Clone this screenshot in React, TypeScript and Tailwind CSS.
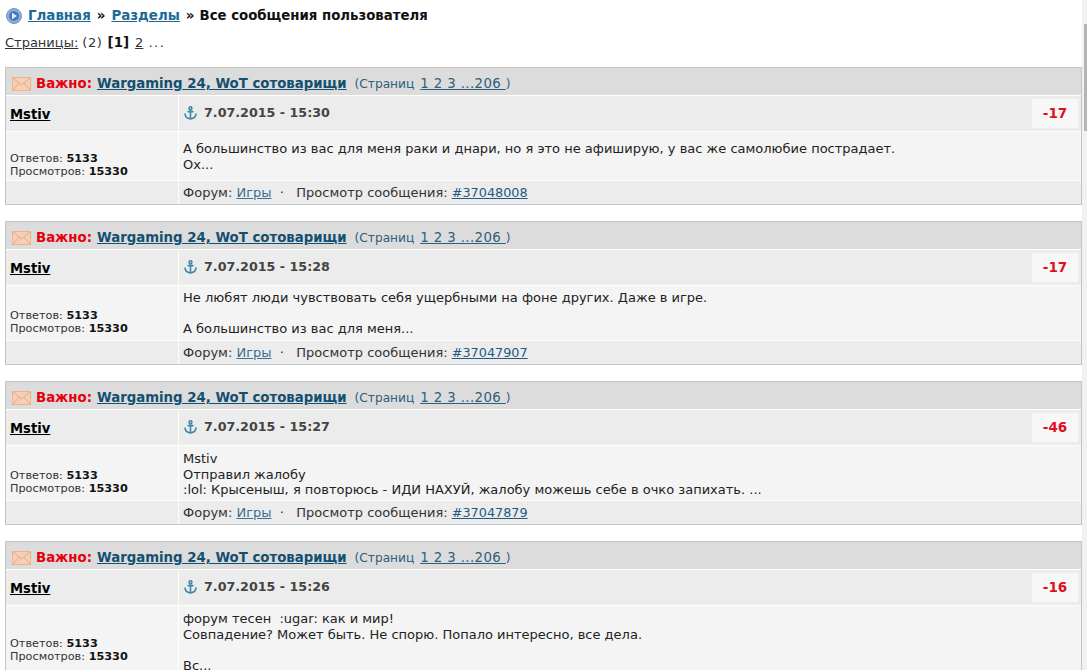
const posts = [
  { time: "7.07.2015 - 15:30", rating: "-17", id: "#37048008", bodyH: "h-[48px]", statPb: "pb-[2px]", bodyPt: "pt-[9px]", lines: ["А большинство из вас для меня раки и днари, но я это не афиширую, у вас же самолюбие пострадает.", "Ох..."] },
  { time: "7.07.2015 - 15:28", rating: "-17", id: "#37047907", bodyH: "h-[54px]", statPb: "pb-[5px]", bodyPt: "pt-[4px]", lines: ["Не любят люди чувствовать себя ущербными на фоне других. Даже в игре.", "\u00a0", "А большинство из вас для меня..."] },
  { time: "7.07.2015 - 15:27", rating: "-46", id: "#37047879", bodyH: "h-[54px]", statPb: "pb-[5px]", bodyPt: "pt-[5px]", lines: ["Mstiv", "Отправил жалобу", ":lol: Крысеныш, я повторюсь - ИДИ НАХУЙ, жалобу можешь себе в очко запихать. ..."] },
  { time: "7.07.2015 - 15:26", rating: "-16", id: "#37047800", bodyH: "h-[72px]", statPb: "pb-[15px]", bodyPt: "pt-[5px]", lines: ["форум тесен  :ugar: как и мир!", "Совпадение? Может быть. Не спорю. Попало интересно, все дела.", "\u00a0", "Вс..."] },
];

function Envelope() {
  return (
    <svg width="19" height="14" viewBox="0 0 19 14" className="shrink-0">
      <rect x="0.5" y="0.5" width="18" height="13" fill="#f6cfb4" stroke="#eeb48f" />
      <path d="M1 1l8.5 7L18 1M1 13l6-6.5M18 13l-6-6.5" fill="none" stroke="#e9a67c" />
    </svg>
  );
}

function Anchor() {
  return (
    <svg width="13" height="14" viewBox="0 0 13 14" className="shrink-0" fill="none" stroke="#3f86a8" strokeWidth="1.6">
      <circle cx="6.5" cy="2.2" r="1.4" />
      <path d="M6.5 3.6V13M3.5 5.6h6M1 7.5c0 3 2.5 5 5.5 5.5 3-.5 5.5-2.5 5.5-5.5" />
    </svg>
  );
}

function PlayBullet() {
  return (
    <svg width="16" height="16" viewBox="0 0 16 16" className="shrink-0">
      <circle cx="8" cy="8" r="7.5" fill="#8fb1dc" stroke="#6f93c4" />
      <circle cx="8" cy="8" r="5" fill="#4a76c4" />
      <path d="M6 4.8v6.4L11 8z" fill="#e6eefa" />
    </svg>
  );
}

function Post({ post }: { post: (typeof posts)[number] }) {
  return (
    <div className="border border-[#c4c4c4] bg-white">
      <div className="flex h-[27px] items-center gap-[5px] bg-[#dcdcdc] pl-[6px] pt-[5px] text-[13.3px]">
        <Envelope />
        <span className="font-bold text-[#e8000f]">Важно:</span>
        <a className="font-bold text-[#134f70] underline">Wargaming 24, WoT сотоварищи</a>
        <span className="ml-[3px] whitespace-pre text-[12.2px] text-[#2f5f7c]">
          (Страниц <a className="ml-[2px] text-[13.3px] tracking-[0.4px] underline">1 2 3 ...206 </a>)
        </span>
      </div>
      <div className="grid grid-cols-[172px_1fr] gap-[1px] bg-white pt-[1px]">
        <div className="flex h-[35px] items-center bg-[#ececec] pl-[4px] pt-[2px]">
          <a className="text-[13.2px] font-bold text-black underline">Mstiv</a>
        </div>
        <div className="flex h-[35px] items-center justify-between bg-[#ececec] pl-[5px] pr-[3px]">
          <div className="flex items-center gap-[7px] pb-[2px]">
            <Anchor />
            <span className="text-[12.7px] font-bold text-[#444]">{post.time}</span>
          </div>
          <div className="flex h-[29px] w-[46px] items-center justify-center bg-[#f7f7f7] text-[13.5px] font-bold text-[#e0101f]">
            {post.rating}
          </div>
        </div>
        <div className={`flex flex-col justify-end bg-[#f4f4f4] pl-[4px] text-[11.25px] leading-[13px] ${post.bodyH} ${post.statPb}`}>
          <div className="text-[#333]">Ответов: <b className="text-[#111]">5133</b></div>
          <div className="text-[#333]">Просмотров: <b className="text-[#111]">15330</b></div>
        </div>
        <div className={`overflow-hidden bg-[#f4f4f4] pl-[4px] leading-[15.6px] text-[#222] ${post.bodyH} ${post.bodyPt}`}>
          {post.lines.map((line, i) => (
            <div key={i} className="whitespace-pre">{line}</div>
          ))}
        </div>
        <div className="h-[23px] bg-[#ececec]" />
        <div className="flex h-[23px] items-center whitespace-pre bg-[#ececec] pl-[4px] text-[#333]">
          Форум: <a className="text-[#3b6f96] underline">Игры</a>{"  ·   "}Просмотр сообщения: <a className="text-[12.8px] text-[#1f5a80] underline">{post.id}</a>
        </div>
      </div>
    </div>
  );
}

export default function App() {
  return (
    <div className="flex h-[670px] w-[1087px] overflow-hidden bg-white font-['DejaVu_Sans',sans-serif] text-[13px]">
      <div className="min-w-0 flex-1 pl-[5px]">
        <div className="flex h-[31px] items-center gap-[6px] pl-[1px] pt-[1px] text-[#111]">
          <PlayBullet />
          <div className="flex gap-[6px] whitespace-pre text-[13.4px] font-bold">
            <a className="text-[#1f6a95] underline">Главная</a>
            <span>»</span>
            <a className="text-[#1f6a95] underline">Разделы</a>
            <span>»</span>
            <span className="ml-[-1px] text-[13.3px]">Все сообщения пользователя</span>
          </div>
        </div>
        <div className="mt-[2px] flex items-baseline gap-[5px] whitespace-pre text-[#333]">
          <a className="underline">Страницы:</a>
          <span className="ml-[-1px] tracking-[0.6px]">(2)</span>
          <b className="text-[13.4px] text-[#111]">[1]</b>
          <a className="ml-[1px] underline">2</a>
          <span className="tracking-[1.5px]">...</span>
        </div>
        <div className="mt-[14px] flex flex-col gap-[16px]">
          {posts.map((post) => (
            <Post key={post.id} post={post} />
          ))}
        </div>
      </div>
      <div className="flex w-[5px] shrink-0 justify-end bg-[#f1f1f1] pt-[24px]">
        <div className="h-[107px] w-[3px] bg-[#b4b4b4]" />
      </div>
    </div>
  );
}
